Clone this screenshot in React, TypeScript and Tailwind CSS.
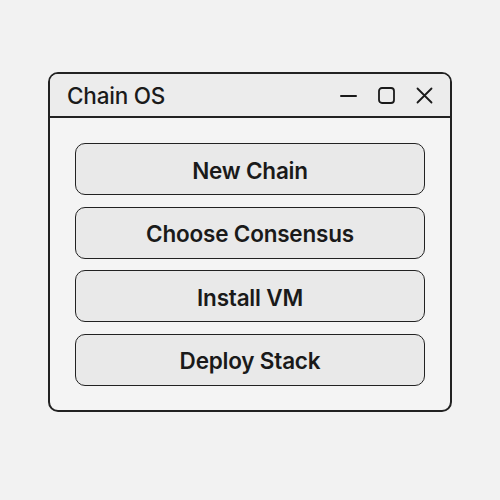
const ACTIONS = ["New Chain", "Choose Consensus", "Install VM", "Deploy Stack"];

export default function App() {
  return (
    <div
      className="w-[500px] h-[500px] bg-[#f2f2f2] pt-[72px] pl-[48px]"
      style={{ fontFamily: "Inter, 'Noto Sans', sans-serif" }}
    >
      <div className="w-[404px] h-[340px] rounded-[10px] border-2 border-[#222] bg-[#f4f4f4] overflow-hidden flex flex-col">
        {/* Title bar */}
        <div className="h-[44px] shrink-0 bg-[#ececec] border-b-2 border-[#222] flex items-center pl-[17px] pr-[17px]">
          <span className="text-[22.5px] font-medium text-[#1a1a1a] tracking-[-0.2px] leading-none pt-[2px]">Chain OS</span>
          <div className="ml-auto flex items-center gap-[21px] text-[#1a1a1a]">
            <svg width="17" height="17" viewBox="0 0 17 17" fill="none" stroke="currentColor" strokeWidth="2" strokeLinecap="round">
              <path d="M1 9h15" />
            </svg>
            <svg width="17" height="17" viewBox="0 0 17 17" fill="none" stroke="currentColor" strokeWidth="1.8">
              <rect x="1" y="1" width="15" height="15" rx="3" />
            </svg>
            <svg width="17" height="17" viewBox="0 0 17 17" fill="none" stroke="currentColor" strokeWidth="1.8" strokeLinecap="round">
              <path d="M1.5 1.5l14 14M15.5 1.5l-14 14" />
            </svg>
          </div>
        </div>

        {/* Action list */}
        <div className="flex flex-col gap-[11.5px] px-[25px] pt-[25px]">
          {ACTIONS.map((label) => (
            <button
              key={label}
              className="h-[52px] rounded-[10px] border-[1.75px] border-[#222] bg-[#e9e9e9] text-[22.5px] font-semibold text-[#1a1a1a] tracking-[-0.2px] pt-[3px]"
            >
              {label}
            </button>
          ))}
        </div>
      </div>
    </div>
  );
}
